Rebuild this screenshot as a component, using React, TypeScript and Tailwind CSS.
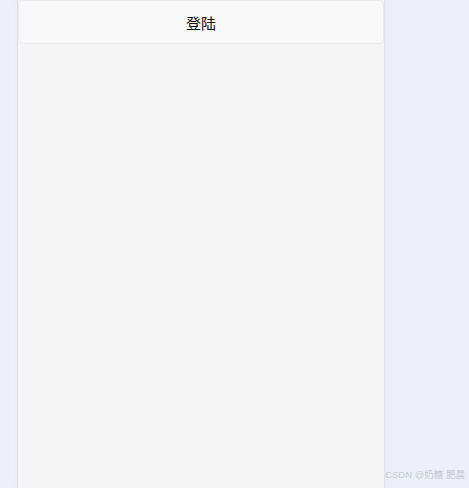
export default function App() {
  return (
    <div className="relative h-[488px] w-[469px] overflow-hidden bg-[#edf0f8] font-['Noto_Sans_CJK_SC',sans-serif]">
      <div className="ml-[17px] flex h-full w-[368px] flex-col border-x border-[#e2e2e4] bg-[#f5f5f5] shadow-[0_0_3px_rgba(0,0,0,0.06)]">
        <div className="flex h-[44px] items-center justify-center rounded-[5px] border border-[#ebebeb] bg-[#f8f8f8] pt-[3px]">
          <span className="text-[15px] text-[#111]">登陆</span>
        </div>
      </div>
      <span className="absolute bottom-[6px] right-[4px] font-['Liberation_Sans','Noto_Sans_CJK_SC',sans-serif] text-[9.5px] text-[#c4c8d0]">
        CSDN @奶糖 肥晨
      </span>
    </div>
  )
}
